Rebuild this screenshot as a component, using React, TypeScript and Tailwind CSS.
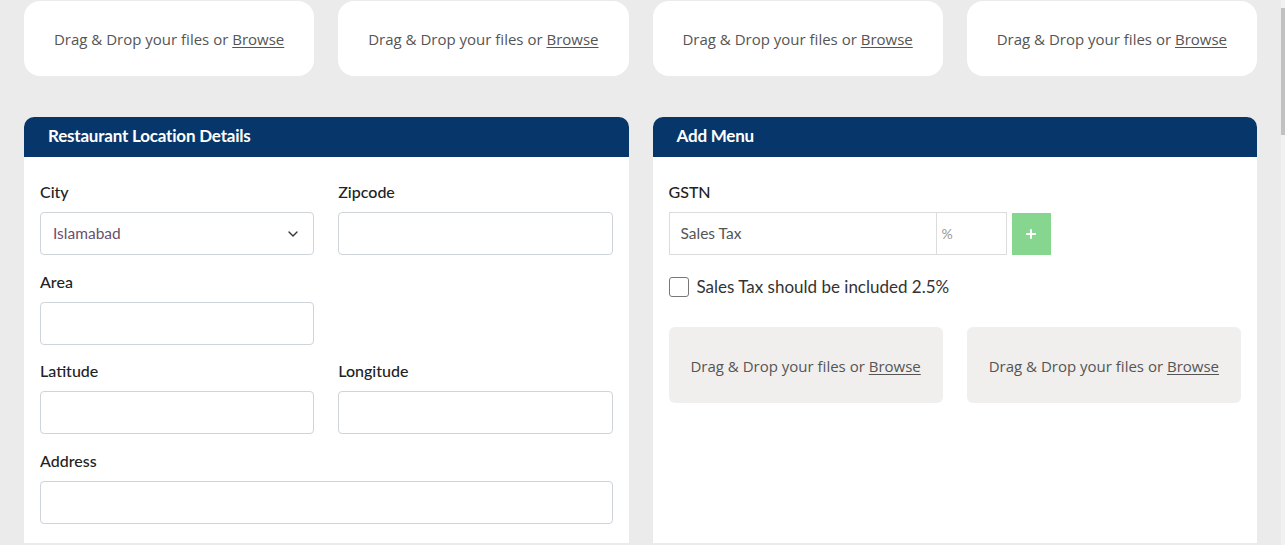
import { ChevronDown, Plus } from "lucide-react"

const raleway = { fontFamily: "Lato, 'Noto Sans', sans-serif" }

function DropZone({ tone }: { tone: "white" | "gray" }) {
  const box =
    tone === "white"
      ? "h-[75px] rounded-2xl bg-white"
      : "h-[76px] rounded-md bg-[#f0efed]"
  return (
    <div className={`${box} flex items-center justify-center text-[15px] text-[#555] font-['Open_Sans',sans-serif]`}>
      <span className="translate-y-px">
        Drag &amp; Drop your files or <span className="underline underline-offset-2">Browse</span>
      </span>
    </div>
  )
}

function Field({ label, children }: { label: string; children?: React.ReactNode }) {
  return (
    <div className="flex flex-col">
      <label className="h-[20px] leading-[20px] text-[16px] font-medium text-[#222] mb-[10px]">{label}</label>
      {children ?? <input className="h-[43px] w-full rounded border border-[#ced4da] bg-white" />}
    </div>
  )
}

function Panel({ title, children }: { title: string; children: React.ReactNode }) {
  return (
    <div className="flex flex-col bg-white rounded-t-[10px] overflow-hidden">
      <div className="h-[40px] bg-[#07376a] px-6 flex items-center">
        <h2 className="text-white text-[17px] leading-[20px] font-bold tracking-[-0.2px] -translate-y-px">{title}</h2>
      </div>
      <div className="px-4 pt-[25px] h-[386px]">{children}</div>
    </div>
  )
}

export default function App() {
  return (
    <div className="flex w-full h-[545px] bg-[#ebebeb] overflow-hidden" style={raleway}>
      <div className="flex-1 pl-6 pr-6">
        <div className="grid grid-cols-4 gap-6 pt-px">
          <DropZone tone="white" />
          <DropZone tone="white" />
          <DropZone tone="white" />
          <DropZone tone="white" />
        </div>

        <div className="grid grid-cols-2 gap-6 mt-[41px]">
          <Panel title="Restaurant Location Details">
            <div className="grid grid-cols-2 gap-x-6 gap-y-[16.5px]">
              <Field label="City">
                <div className="h-[43px] rounded border border-[#ced4da] bg-white flex items-center justify-between pl-3 pr-3">
                  <span className="text-[15.5px] text-[#6a4f6e]">Islamabad</span>
                  <ChevronDown className="w-[16px] h-[16px] text-[#333]" strokeWidth={2} />
                </div>
              </Field>
              <Field label="Zipcode" />
              <Field label="Area" />
              <div />
              <Field label="Latitude" />
              <Field label="Longitude" />
              <div className="col-span-2">
                <Field label="Address" />
              </div>
            </div>
          </Panel>

          <Panel title="Add Menu">
            <Field label="GSTN">
              <div className="flex items-center gap-[5px]">
                <div className="flex h-[43px] w-[338px] border border-[#dcdcdc]">
                  <div className="flex-1 flex items-center pl-[11px] text-[15.5px] text-[#555]">Sales Tax</div>
                  <div className="w-[70px] border-l border-[#dcdcdc] flex items-center pl-[5px] text-[14px] text-[#999]">%</div>
                </div>
                <button className="h-[42px] w-[39px] bg-[#86d68f] flex items-center justify-center">
                  <Plus className="w-[14px] h-[14px] text-white" strokeWidth={3.5} />
                </button>
              </div>
            </Field>
            <div className="flex items-center gap-[8px] mt-[20px]">
              <span className="w-[20px] h-[20px] rounded-[3px] border border-[#777] bg-white" />
              <span className="text-[17px] leading-[24px] text-[#333]">Sales Tax should be included 2.5%</span>
            </div>
            <div className="grid grid-cols-2 gap-6 mt-[28px]">
              <DropZone tone="gray" />
              <DropZone tone="gray" />
            </div>
          </Panel>
        </div>
      </div>
      <div className="w-[4px] bg-[#f1f1f1] flex flex-col pt-[8px]">
        <div className="h-[127px] bg-[#c1c1c1]" />
      </div>
    </div>
  )
}
